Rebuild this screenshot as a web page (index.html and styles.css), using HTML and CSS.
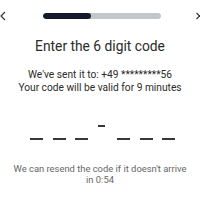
FILE: index.html
```html
<!DOCTYPE html>
<html>
<head>
<meta charset="utf-8">
<link rel="stylesheet" href="styles.css">
</head>
<body>
<div class="screen">
  <div class="header">
    <svg class="back" width="6" height="10" viewBox="0 0 6 10"><path d="M5 1 L1 5 L5 9" fill="none" stroke="#333" stroke-width="1.2"/></svg>
    <div class="progress"><div class="progress-fill"></div></div>
    <svg class="close" width="4" height="8" viewBox="0 0 4 8"><path d="M0.5 1 L6.5 7 M6.5 1 L0.5 7" fill="none" stroke="#333" stroke-width="1.2"/></svg>
  </div>
  <h1 class="title">Enter the 6 digit code</h1>
  <p class="info">We've sent it to: +49 *********56<br>Your code will be valid for 9 minutes</p>
  <div class="code">
    <span class="slot"></span><span class="slot"></span><span class="slot"></span>
    <span class="sep"></span>
    <span class="slot"></span><span class="slot"></span><span class="slot"></span>
  </div>
  <p class="resend">We can resend the code if it doesn't arrive<br>in 0:54</p>
</div>
</body>
</html>
```
FILE: styles.css
```css
html, body { margin: 0; padding: 0; background: #fff; }
body { width: 200px; height: 200px; overflow: hidden; font-family: Roboto, "Liberation Sans", sans-serif; }
.screen { display: flex; flex-direction: column; align-items: center; }
.header { width: 200px; height: 32px; display: flex; align-items: center; justify-content: space-between; }
.back { display: block; }
.close { display: block; }
.progress { width: 119px; height: 6px; border-radius: 3px; background: #c3c6ca; margin-left: 37px; margin-right: 35px; overflow: hidden; }
.progress-fill { width: 48px; height: 6px; border-radius: 3px; background: #141b2a; }
.title { margin: 6px 0 0; font-size: 13.8px; font-weight: 400; color: #2a2a2a; line-height: 16px; }
.info { margin: 14px 0 0; font-size: 10.2px; line-height: 13px; color: #2a2a2a; text-align: center; }
.code { margin-top: 30px; display: flex; align-items: flex-end; height: 16px; padding-left: 5px; }
.slot { width: 13px; height: 2px; background: #383838; margin: 0 4.75px; }
.sep { width: 7px; height: 2px; background: #383838; margin: 0 7.25px 13px 5.25px; }
.resend { margin: 23px 0 0; font-size: 9.4px; line-height: 11px; color: #666; text-align: center; white-space: nowrap; }
```
